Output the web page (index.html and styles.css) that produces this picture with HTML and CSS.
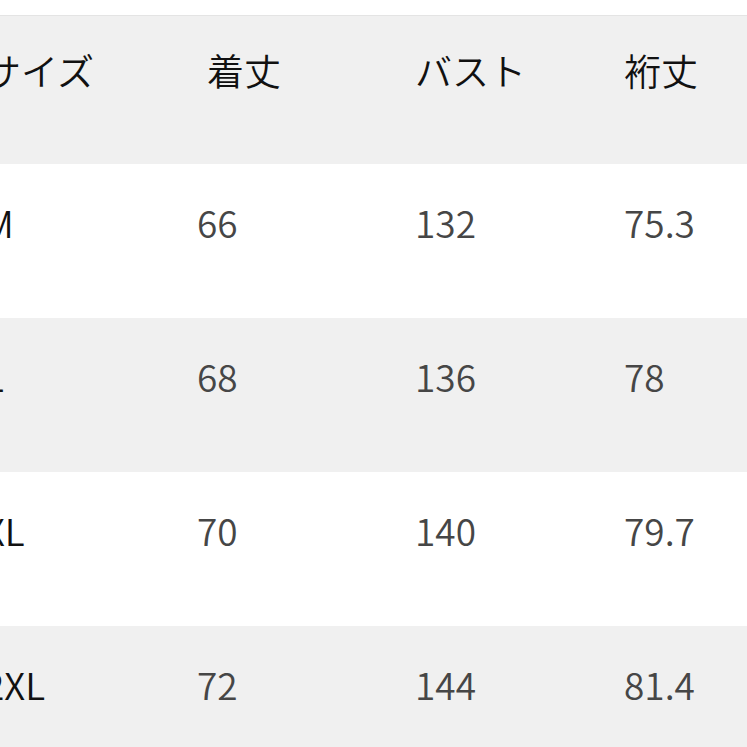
FILE: index.html
```html
<!DOCTYPE html>
<html lang="ja">
<head>
<meta charset="utf-8">
<link rel="stylesheet" href="styles.css">
</head>
<body>
<div class="page">
  <div class="table">
    <div class="row head">
      <div class="cell">サイズ</div>
      <div class="cell shifted">着丈</div>
      <div class="cell">バスト</div>
      <div class="cell">裄丈</div>
    </div>
    <div class="row">
      <div class="cell size">M</div>
      <div class="cell">66</div>
      <div class="cell">132</div>
      <div class="cell">75.3</div>
    </div>
    <div class="row alt">
      <div class="cell size">L</div>
      <div class="cell">68</div>
      <div class="cell">136</div>
      <div class="cell">78</div>
    </div>
    <div class="row">
      <div class="cell size">XL</div>
      <div class="cell">70</div>
      <div class="cell">140</div>
      <div class="cell">79.7</div>
    </div>
    <div class="row alt">
      <div class="cell size">2XL</div>
      <div class="cell">72</div>
      <div class="cell">144</div>
      <div class="cell">81.4</div>
    </div>
  </div>
</div>
</body>
</html>
```
FILE: styles.css
```css
html, body {
  margin: 0;
  padding: 0;
  background: #ffffff;
  overflow: hidden;
}
.page {
  width: 747px;
  height: 747px;
  overflow: hidden;
  padding-top: 15px;
  box-sizing: border-box;
  font-family: "Noto Sans CJK JP", "Noto Sans", sans-serif;
}
.table {
  margin-left: -16px;
  border-top: 1px solid #e4e4e4;
  display: flex;
  flex-direction: column;
}
.row {
  display: grid;
  grid-template-columns: 213px 218px 209px 200px;
  height: 154px;
  box-sizing: border-box;
  padding-top: 31px;
  color: #464646;
  font-size: 37px;
  font-weight: 350;
  line-height: 54px;
}
.row.head {
  height: 148px;
  padding-top: 27px;
  background: #f0f0f0;
  color: #111111;
}
.row.alt {
  background: #f0f0f0;
}
.cell.size {
  color: #111111;
}
.cell.shifted {
  padding-left: 10px;
}
```
